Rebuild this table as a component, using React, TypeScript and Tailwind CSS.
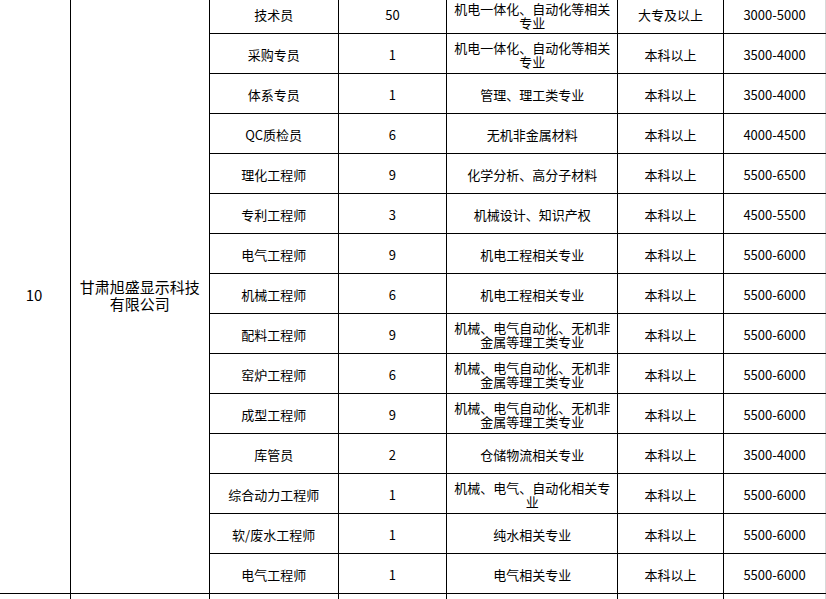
import React from 'react';

interface JobRow {
  title: string;
  count: string;
  major: string;
  edu: string;
  salary: string;
}

const jobs: JobRow[] = [
  { title: '技术员', count: '50', major: '机电一体化、自动化等相关专业', edu: '大专及以上', salary: '3000-5000' },
  { title: '采购专员', count: '1', major: '机电一体化、自动化等相关专业', edu: '本科以上', salary: '3500-4000' },
  { title: '体系专员', count: '1', major: '管理、理工类专业', edu: '本科以上', salary: '3500-4000' },
  { title: 'QC质检员', count: '6', major: '无机非金属材料', edu: '本科以上', salary: '4000-4500' },
  { title: '理化工程师', count: '9', major: '化学分析、高分子材料', edu: '本科以上', salary: '5500-6500' },
  { title: '专利工程师', count: '3', major: '机械设计、知识产权', edu: '本科以上', salary: '4500-5500' },
  { title: '电气工程师', count: '9', major: '机电工程相关专业', edu: '本科以上', salary: '5500-6000' },
  { title: '机械工程师', count: '6', major: '机电工程相关专业', edu: '本科以上', salary: '5500-6000' },
  { title: '配料工程师', count: '9', major: '机械、电气自动化、无机非金属等理工类专业', edu: '本科以上', salary: '5500-6000' },
  { title: '窑炉工程师', count: '6', major: '机械、电气自动化、无机非金属等理工类专业', edu: '本科以上', salary: '5500-6000' },
  { title: '成型工程师', count: '9', major: '机械、电气自动化、无机非金属等理工类专业', edu: '本科以上', salary: '5500-6000' },
  { title: '库管员', count: '2', major: '仓储物流相关专业', edu: '本科以上', salary: '3500-4000' },
  { title: '综合动力工程师', count: '1', major: '机械、电气、自动化相关专业', edu: '本科以上', salary: '5500-6000' },
  { title: '软/废水工程师', count: '1', major: '纯水相关专业', edu: '本科以上', salary: '5500-6000' },
  { title: '电气工程师', count: '1', major: '电气相关专业', edu: '本科以上', salary: '5500-6000' },
];

const cell = 'border border-black h-[40px] p-0 pt-[2px] px-[4px] text-center align-middle text-[13px] leading-[14px]';
const lastCell = 'border border-black border-r-[#d8d8d8] h-[40px] p-0 pt-[2px] px-[4px] text-center align-middle text-[13px] leading-[14px]';
// the first row is scrolled partly out of view; its two-line cell sits a bit lower
const firstMajor = 'border border-black h-[40px] p-0 pt-[5px] px-[4px] text-center align-middle text-[13px] leading-[14px]';

export default function App() {
  return (
    <div
      className="h-[599px] w-[826px] overflow-hidden bg-white text-black"
      style={{ fontFamily: '"Noto Sans CJK SC", "Noto Sans", sans-serif' }}
    >
      <table className="-mt-[7px] -ml-[3px] table-fixed border-collapse">
        <colgroup>
          <col className="w-[73px]" />
          <col className="w-[139px]" />
          <col className="w-[129px]" />
          <col className="w-[109px]" />
          <col className="w-[171px]" />
          <col className="w-[106px]" />
          <col className="w-[102px]" />
        </colgroup>
        <tbody>
          {jobs.map((job, i) => (
            <tr key={i}>
              {i === 0 && (
                <>
                  <td rowSpan={jobs.length} className="border border-black p-0 pt-[2px] text-center align-middle text-[15px] leading-[17px]">
                    10
                  </td>
                  <td rowSpan={jobs.length} className="border border-black p-0 pt-[2px] px-[6px] text-center align-middle text-[15px] leading-[17px]">
                    甘肃旭盛显示科技有限公司
                  </td>
                </>
              )}
              <td className={cell}>{job.title}</td>
              <td className={cell}>{job.count}</td>
              <td className={i === 0 ? firstMajor : cell}>{job.major}</td>
              <td className={cell}>{job.edu}</td>
              <td className={lastCell}>{job.salary}</td>
            </tr>
          ))}
          <tr>
            <td className={cell}></td>
            <td className={cell}></td>
            <td className={cell}></td>
            <td className={cell}></td>
            <td className={cell}></td>
            <td className={cell}></td>
            <td className={lastCell}></td>
          </tr>
        </tbody>
      </table>
    </div>
  );
}
